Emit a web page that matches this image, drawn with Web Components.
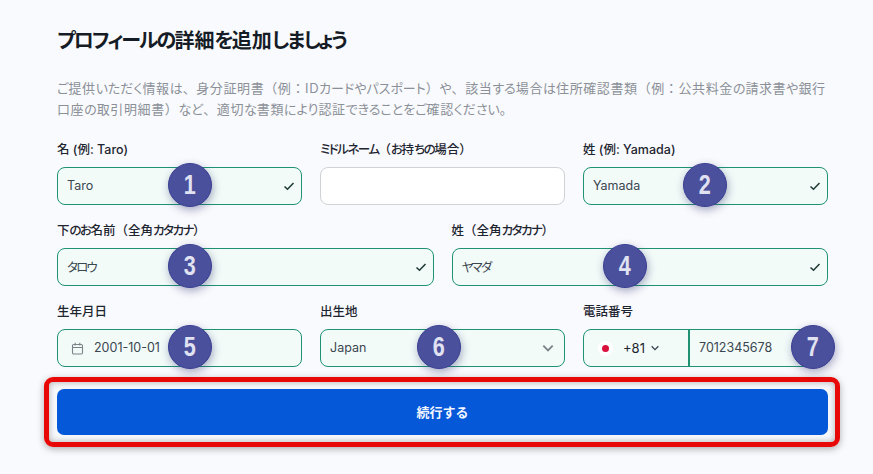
<!DOCTYPE html>
<html lang="ja">
<head>
<meta charset="utf-8">
<title>プロフィール</title>
<style>
  html, body { margin: 0; height: 474px; overflow: hidden; background: #f9fafd; }
  body { font-family: Inter, "Noto Sans CJK JP", sans-serif; }
</style>
</head>
<body>
<profile-page>
  <ja-text slot="title">プロフィールの詳細を追加しましょう</ja-text>
  <ja-text slot="intro">ご提供いただく情報は、身分証明書（例：IDカードやパスポート）や、該当する場合は住所確認書類（例：公共料金の請求書や銀行口座の取引明細書）など、適切な書類により認証できることをご確認ください。</ja-text>

  <form-row slot="rows">
    <form-field label="名 (例: Taro)" value="Taro" state="ok" step="1" step-x="111"></form-field>
    <form-field label="ミドルネーム（お持ちの場合）"></form-field>
    <form-field label="姓 (例: Yamada)" value="Yamada" state="ok" step="2" step-x="100"></form-field>
  </form-row>
  <form-row slot="rows">
    <form-field label="下のお名前（全角カタカナ）" value="タロウ" state="ok" step="3" step-x="111"></form-field>
    <form-field label="姓（全角カタカナ）" value="ヤマダ" state="ok" step="4" step-x="151"></form-field>
  </form-row>
  <form-row slot="rows">
    <form-field label="生年月日" value="2001-10-01" kind="date" step="5" step-x="111"></form-field>
    <form-field label="出生地" value="Japan" kind="select" step="6" step-x="97"></form-field>
    <form-field label="電話番号" value="7012345678" kind="phone" step="7" step-x="208"></form-field>
  </form-row>

  <continue-button slot="action">続行する</continue-button>
</profile-page>

<script>
// kana runs get proportional widths, kanji and full-width punctuation stay square
class JaText extends HTMLElement {
  constructor() {
    super();
    this.attachShadow({ mode: "open" });
  }

  connectedCallback() {
    const text = this.getAttribute("text") || this.textContent;
    this.shadowRoot.innerHTML = `
      <style>
        :host { display: inline; }
        .kana {
          font-feature-settings: "palt";
          letter-spacing: var(--kana-spacing, 0);
        }
      </style>
      ${text.replace(/[\u3040-\u30ff]+/g, m => `<span class="kana">${m}</span>`)}
    `;
  }
}

class ProfilePage extends HTMLElement {
  constructor() {
    super();
    this.attachShadow({ mode: "open" });
    this.shadowRoot.innerHTML = `
      <style>
        :host {
          display: block;
          padding: 0 45px 0 57px;
          font-family: Inter, "Noto Sans CJK JP", sans-serif;
        }
        h1 {
          --kana-spacing: -1.9px;
          margin: 0;
          padding-top: 27px;
          font-size: 20px;
          line-height: 28px;
          font-weight: 700;
          color: #161c26;
        }
        p {
          --kana-spacing: 0;
          margin: 0;
          padding-top: 23px;
          font-size: 13px;
          line-height: 21px;
          letter-spacing: 0.6px;
          color: #8b9098;
        }
        .rows {
          display: flex;
          flex-direction: column;
          gap: 17px;
          padding-top: 21px;
        }
        .action { padding-top: 22px; }
      </style>
      <h1><slot name="title"></slot></h1>
      <p><slot name="intro"></slot></p>
      <div class="rows"><slot name="rows"></slot></div>
      <div class="action"><slot name="action"></slot></div>
    `;
  }
}

class FormRow extends HTMLElement {
  constructor() {
    super();
    this.attachShadow({ mode: "open" });
    this.shadowRoot.innerHTML = `
      <style>
        :host { display: flex; gap: 18px; }
        ::slotted(*) { flex: 1 1 0; min-width: 0; }
      </style>
      <slot></slot>
    `;
  }
}

const checkIcon = `<svg class="end check" width="12" height="12" viewBox="0 0 12 12" fill="none" stroke="#1f3a35" stroke-width="1.5"><path d="M1.5 6.5 4.5 9.3 10.5 3"/></svg>`;
const chevron = (size, color) => `<svg width="${size}" height="${size}" viewBox="0 0 12 12" fill="none" stroke="${color}" stroke-width="1.6"><path d="M2 4 6 8 10 4"/></svg>`;
const calendarIcon = `<svg width="13" height="13" viewBox="0 0 13 13" fill="none" stroke="#7c8288" stroke-width="1.1"><rect x="1.5" y="2.5" width="10" height="9.5" rx="1.2"/><path d="M1.5 5.5H11.5M4.2 .8V3.4M8.8 .8V3.4"/></svg>`;

class FormField extends HTMLElement {
  constructor() {
    super();
    this.attachShadow({ mode: "open" });
  }

  connectedCallback() {
    const label = this.getAttribute("label");
    const value = this.getAttribute("value") || "";
    const kind = this.getAttribute("kind") || "text";
    const filled = value !== "";
    const step = this.getAttribute("step");

    let inner = `<span class="value"><ja-text text="${value}"></ja-text></span>`;
    if (this.getAttribute("state") === "ok") inner += checkIcon;
    if (kind === "date") inner = `<span class="lead">${calendarIcon}</span>${inner}`;
    if (kind === "select") inner += `<span class="end">${chevron(14, "#7d8388")}</span>`;
    if (kind === "phone") {
      inner = `
        <span class="code">
          <span class="flag"></span><span>+81</span>${chevron(10, "#3a4650")}
        </span>
        <span class="number">${value}</span>`;
    }

    this.shadowRoot.innerHTML = `
      <style>
        :host { display: block; position: relative; }
        label {
          --kana-spacing: -1.5px;
          display: block;
          height: 18px;
          margin-bottom: 8px;
          font-size: 12.5px;
          line-height: 18px;
          font-weight: 500;
          color: #1d2530;
          white-space: nowrap;
        }
        .box {
          --kana-spacing: -1.8px;
          box-sizing: border-box;
          display: flex;
          align-items: center;
          height: 38px;
          padding: 0 9px;
          border: 1px solid #cfd3d6;
          border-radius: 8px;
          background: #fff;
          font-size: 12.5px;
          color: #3a4650;
        }
        .box.filled {
          border-color: #1f9274;
          background: #f2fbf8;
        }
        .value, .number { position: relative; top: -1px; }
        .box.phone { padding: 0; }
        .end { margin-left: auto; flex: none; display: flex; }
        .check { margin-right: -3px; }
        .lead { display: flex; margin: 0 10px 0 4px; }
        .code {
          box-sizing: border-box;
          display: flex;
          align-items: center;
          flex: none;
          width: 106px;
          height: 100%;
          padding-left: 18px;
          border-right: 2px solid #1f9274;
          font-size: 13px;
          color: #1d2530;
        }
        .code svg { margin-left: 5px; }
        .flag {
          width: 7px;
          height: 7px;
          margin-right: 14px;
          border-radius: 50%;
          background: #d90f3c;
          box-shadow: 0 0 0 4px #fff;
        }
        .number { padding-left: 9px; }
      </style>
      <label><ja-text text="${label}"></ja-text></label>
      <div class="box ${filled ? "filled" : ""} ${kind}">${inner}</div>
      ${step ? `<step-badge style="left:${this.getAttribute("step-x")}px">${step}</step-badge>` : ""}
    `;
  }
}

class StepBadge extends HTMLElement {
  constructor() {
    super();
    this.attachShadow({ mode: "open" });
    this.shadowRoot.innerHTML = `
      <style>
        :host {
          position: absolute;
          top: 22px;
          z-index: 2;
          box-sizing: border-box;
          display: flex;
          align-items: center;
          justify-content: center;
          width: 44px;
          height: 44px;
          border: 1px solid #3a3f93;
          border-radius: 50%;
          background: #4b509c;
          box-shadow: 1px 3px 8px rgba(40, 44, 110, 0.4);
          font-family: "Liberation Sans", sans-serif;
          font-size: 24px;
          font-weight: 700;
          color: #e0e2f2;
        }
        span { display: block; transform: scale(0.9, 1.12); }
      </style>
      <span><slot></slot></span>
    `;
  }
}

class ContinueButton extends HTMLElement {
  constructor() {
    super();
    this.attachShadow({ mode: "open" });
    this.shadowRoot.innerHTML = `
      <style>
        :host { display: block; position: relative; }
        button {
          display: block;
          width: 100%;
          height: 46px;
          padding-bottom: 2px;
          border: 0;
          border-radius: 7px;
          background: #0558d8;
          font: 700 13px Inter, "Noto Sans CJK JP", sans-serif;
          color: #f2f6ff;
        }
        .frame {
          position: absolute;
          inset: -12px -12px -12px -13px;
          border: 5px solid #e80808;
          border-radius: 9px;
          box-shadow: 0 2px 7px rgba(60, 60, 60, 0.4), inset 0 0 7px rgba(60, 60, 60, 0.4);
          pointer-events: none;
        }
      </style>
      <button type="button"><slot></slot></button>
      <div class="frame"></div>
    `;
  }
}

customElements.define("ja-text", JaText);
customElements.define("profile-page", ProfilePage);
customElements.define("form-row", FormRow);
customElements.define("form-field", FormField);
customElements.define("step-badge", StepBadge);
customElements.define("continue-button", ContinueButton);
</script>
</body>
</html>
